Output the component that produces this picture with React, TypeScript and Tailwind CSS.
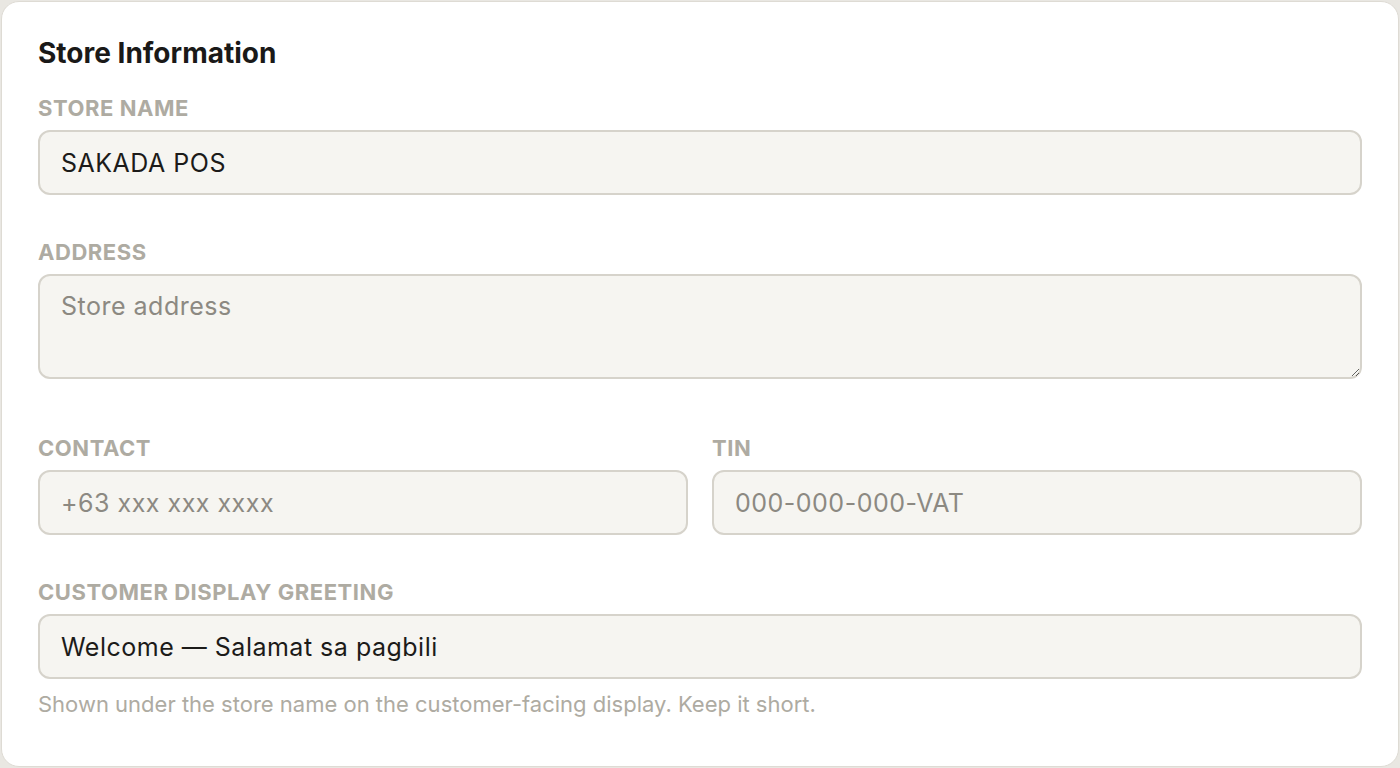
import { useState } from 'react';

const labelCls =
  'block text-[22px] leading-[24px] font-bold uppercase tracking-[0.025em] text-[#aeaba2]';
const fieldCls =
  'w-full rounded-[12px] border-2 border-[#d6d3cb] bg-[#f6f5f1] px-[21px] text-[25px] tracking-[0.02em] text-[#1c1b19] placeholder:text-[#8c8982] focus:outline-none';

export default function App() {
  const [name, setName] = useState('SAKADA POS');
  const [address, setAddress] = useState('');
  const [contact, setContact] = useState('');
  const [tin, setTin] = useState('');
  const [greeting, setGreeting] = useState('Welcome — Salamat sa pagbili');

  return (
    <div className="min-h-screen bg-[#e9e7e2] p-px font-['Inter',sans-serif]">
      <div className="h-[766px] rounded-[18px] border border-[#dedbd4] bg-white px-[36px] pt-[31px]">
        <h2 className="text-[28px] leading-[40px] font-bold text-[#1a1918]">Store Information</h2>

        <div className="mt-[23px]">
          <label className={labelCls}>Store Name</label>
          <input
            value={name}
            onChange={(e) => setName(e.target.value)}
            className={`${fieldCls} mt-[10px] h-[65px]`}
          />
        </div>

        <div className="mt-[45px]">
          <label className={labelCls}>Address</label>
          <textarea
            value={address}
            onChange={(e) => setAddress(e.target.value)}
            placeholder="Store address"
            className={`${fieldCls} mt-[10px] block h-[105px] py-[14px] leading-[32px]`}
          />
        </div>

        <div className="mt-[57px] grid grid-cols-2 gap-[24px]">
          <div>
            <label className={labelCls}>Contact</label>
            <input
              value={contact}
              onChange={(e) => setContact(e.target.value)}
              placeholder="+63 xxx xxx xxxx"
              className={`${fieldCls} mt-[10px] h-[65px]`}
            />
          </div>
          <div>
            <label className={labelCls}>TIN</label>
            <input
              value={tin}
              onChange={(e) => setTin(e.target.value)}
              placeholder="000-000-000-VAT"
              className={`${fieldCls} mt-[10px] h-[65px]`}
            />
          </div>
        </div>

        <div className="mt-[45px]">
          <label className={labelCls}>Customer Display Greeting</label>
          <input
            value={greeting}
            onChange={(e) => setGreeting(e.target.value)}
            className={`${fieldCls} mt-[10px] h-[65px]`}
          />
          <p className="mt-[12px] text-[22px] leading-[26px] text-[#aeaba2]">
            Shown under the store name on the customer-facing display. Keep it short.
          </p>
        </div>
      </div>
    </div>
  );
}
